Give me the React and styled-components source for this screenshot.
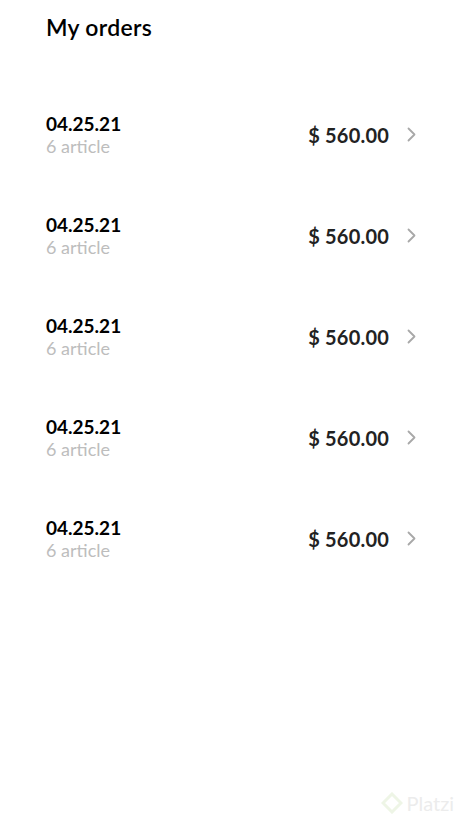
import React from 'react';
import styled, { createGlobalStyle } from 'styled-components';

const GlobalStyle = createGlobalStyle`
  body {
    margin: 0;
    background: #ffffff;
    font-family: 'Lato', 'Noto Sans', sans-serif;
  }
`;

const Page = styled.main`
  position: relative;
  width: 460px;
  height: 821px;
  padding: 13px 44px 0 46px;
  box-sizing: border-box;
`;

const Title = styled.h1`
  font-size: 23px;
  font-weight: 600;
  color: #000000;
  margin: 0 0 43px;
  letter-spacing: 0.3px;
`;

const List = styled.ul`
  list-style: none;
  margin: 0;
  padding: 0;
`;

const Row = styled.li`
  display: flex;
  align-items: center;
  justify-content: space-between;
  height: 101px;
`;

const Info = styled.div`
  display: flex;
  flex-direction: column;
`;

const Date = styled.span`
  font-size: 19px;
  font-weight: 700;
  color: #000000;
  line-height: 22px;
`;

const Count = styled.span`
  font-size: 18px;
  color: #bdbdbd;
  line-height: 22px;
`;

const Right = styled.div`
  display: flex;
  align-items: center;
  gap: 18px;
`;

const Price = styled.span`
  font-size: 20px;
  font-weight: 700;
  color: #222222;
  letter-spacing: 0.2px;
`;

const Watermark = styled.div`
  position: absolute;
  right: 6px;
  bottom: 6px;
  display: flex;
  align-items: center;
  gap: 4px;
  font-size: 20px;
  color: #ececec;
`;

const Chevron = () => (
  <svg width="9" height="15" viewBox="0 0 9 15" fill="none">
    <polyline points="1.5,1.5 7.5,7.5 1.5,13.5" stroke="#a8a8a8" strokeWidth="1.8" strokeLinecap="round" strokeLinejoin="round" />
  </svg>
);

const orders = Array.from({ length: 5 }, () => ({ date: '04.25.21', articles: 6, total: '$ 560.00' }));

export default function App() {
  return (
    <Page>
      <GlobalStyle />
      <Title>My orders</Title>
      <List>
        {orders.map((o, i) => (
          <Row key={i}>
            <Info>
              <Date>{o.date}</Date>
              <Count>{o.articles} article</Count>
            </Info>
            <Right>
              <Price>{o.total}</Price>
              <Chevron />
            </Right>
          </Row>
        ))}
      </List>
      <Watermark>
        <svg width="22" height="22" viewBox="0 0 22 22" fill="none">
          <path d="M11 2 L20 11 L11 20 L2 11 Z" stroke="#eef5e6" strokeWidth="3" />
        </svg>
        Platzi
      </Watermark>
    </Page>
  );
}
